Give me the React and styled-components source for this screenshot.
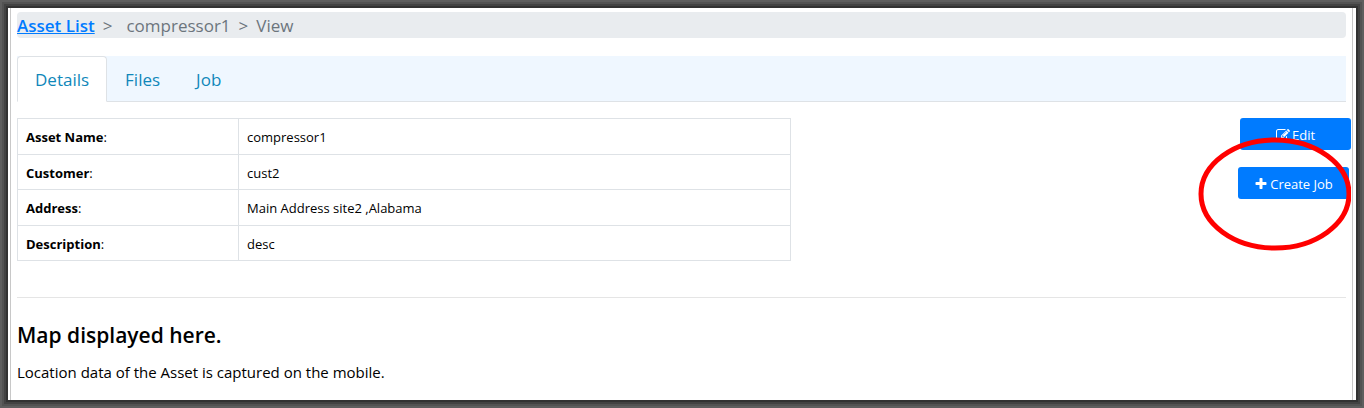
import React from "react";
import styled, { createGlobalStyle } from "styled-components";

const GlobalStyle = createGlobalStyle`
  *, *::before, *::after { box-sizing: border-box; }
  body {
    margin: 0;
    background: #fff;
    color: #000;
    font-family: "Segoe UI", "Open Sans", "Noto Sans", sans-serif;
    font-size: 13px;
    line-height: 20px;
  }
`;

const Frame = styled.div`
  min-height: 100vh;
  padding: 8px 11px 8px 10px;
  display: flex;
  box-shadow:
    inset 0 0 0 2px #5e5e5e,
    inset 0 0 0 4px #525252,
    inset 0 0 0 6px #424242,
    inset 0 0 0 8px #323232;
`;

const Page = styled.main`
  flex: 1;
  min-width: 0;
  padding: 4px 6px 16px;
  border: solid #c8c8c8;
  border-width: 0 1px;
`;

const Breadcrumb = styled.nav`
  display: flex;
  gap: 8px;
  height: 26px;
  border-radius: 4px;
  background: #e9ecef;
  color: #6c757d;
  font-size: 17px;
  line-height: 27px;
`;

const CrumbLink = styled.a`
  color: #007bff;
  font-weight: 600;
  text-decoration: underline;
`;

const Crumb = styled.span`
  margin-left: ${(p) => (p.$spaced ? "6px" : "0")};
`;

const Tabs = styled.div`
  display: flex;
  margin-top: 18px;
  height: 46px;
  background: #eff7ff;
  border-bottom: 1px solid #dee2e6;
`;

const Tab = styled.button`
  height: 46px;
  padding: 2px 17px 0;
  border: 1px solid;
  border-color: ${(p) => (p.$active ? "#dee2e6 #dee2e6 #fff" : "transparent")};
  border-radius: 4px 4px 0 0;
  background: ${(p) => (p.$active ? "#fff" : "transparent")};
  color: #0f87ba;
  font: inherit;
  font-size: 17px;
  cursor: pointer;
`;

const Body = styled.section`
  display: flex;
  justify-content: space-between;
  align-items: flex-start;
  margin: 16px -5px 0 0;
`;

const DetailTable = styled.table`
  width: 58%;
  height: 143px;
  border-collapse: collapse;
  table-layout: fixed;

  th, td {
    padding: 2px 8px 0;
    border: 1px solid #dee2e6;
    text-align: left;
    font-weight: 400;
  }
  th { width: 221px; }
`;

const Actions = styled.div`
  display: flex;
  flex-direction: column;
  align-items: flex-end;
  gap: 17px;
`;

const ActionButton = styled.button`
  display: flex;
  align-items: center;
  justify-content: center;
  gap: 2px;
  width: 111px;
  height: 32px;
  padding: 2px 0 0;
  border: 0;
  border-radius: 3px;
  background: #007bff;
  color: #fff;
  font: inherit;
  white-space: nowrap;
  cursor: pointer;
`;

const Icon = styled.svg`
  width: 14px;
  height: 14px;
  fill: currentColor;
`;

const Highlighted = styled.div`
  position: relative;
  margin-right: 2px;
`;

const Marker = styled.svg`
  position: absolute;
  top: -30px;
  left: -41px;
  width: 154px;
  height: 115px;
  pointer-events: none;
`;

const Divider = styled.hr`
  margin: 36px 0 0;
  border: 0;
  border-top: 1px solid #e5e5e5;
`;

const Heading = styled.h1`
  margin: 22px 0 0;
  font-size: 21px;
  line-height: 30px;
  font-weight: 600;
`;

const Note = styled.p`
  margin: 12px 0 0;
  font-size: 15px;
`;

const details = [
  ["Asset Name", "compressor1"],
  ["Customer", "cust2"],
  ["Address", "Main Address site2 ,Alabama"],
  ["Description", "desc"],
];

const EditIcon = () => (
  <Icon viewBox="0 0 1792 1792" aria-hidden="true">
    <path d="M888 1184l116-116-152-152-116 116v56h96v96h56zm440-720q-16-16-33 1l-350 350q-17 17-1 33t33-1l350-350q17-17 1-33zm80 594v190q0 119-84.5 203.5t-203.5 84.5h-832q-119 0-203.5-84.5t-84.5-203.5v-832q0-119 84.5-203.5t203.5-84.5h832q63 0 117 25 15 7 18 23 3 17-9 29l-49 49q-14 14-32 8-23-6-45-6h-832q-66 0-113 47t-47 113v832q0 66 47 113t113 47h832q66 0 113-47t47-113v-126q0-13 9-22l64-64q15-15 35-7t20 29zm-96-738l288 288-672 672h-288v-288zm444 132l-92 92-288-288 92-92q28-28 68-28t68 28l152 152q28 28 28 68t-28 68z" />
  </Icon>
);

const PlusIcon = () => (
  <Icon viewBox="0 0 1792 1792" aria-hidden="true">
    <path d="M1600 736v192q0 40-28 68t-68 28h-416v416q0 40-28 68t-68 28h-192q-40 0-68-28t-28-68v-416h-416q-40 0-68-28t-28-68v-192q0-40 28-68t68-28h416v-416q0-40 28-68t68-28h192q40 0 68 28t28 68v416h416q40 0 68 28t28 68z" />
  </Icon>
);

export default function App() {
  return (
    <Frame>
      <GlobalStyle />
      <Page>
        <Breadcrumb aria-label="Breadcrumb">
          <CrumbLink href="#assets">Asset List</CrumbLink>
          <span>&gt;</span>
          <Crumb $spaced>compressor1</Crumb>
          <span>&gt;</span>
          <Crumb>View</Crumb>
        </Breadcrumb>
        <Tabs role="tablist">
          <Tab role="tab" aria-selected="true" $active>Details</Tab>
          <Tab role="tab" aria-selected="false">Files</Tab>
          <Tab role="tab" aria-selected="false">Job</Tab>
        </Tabs>
        <Body>
          <DetailTable>
            <tbody>
              {details.map(([label, value]) => (
                <tr key={label}>
                  <th scope="row"><b>{label}</b>:</th>
                  <td>{value}</td>
                </tr>
              ))}
            </tbody>
          </DetailTable>
          <Actions>
            <ActionButton type="button"><EditIcon />Edit</ActionButton>
            <Highlighted>
              <ActionButton type="button"><PlusIcon />Create Job</ActionButton>
              <Marker viewBox="0 0 154 115" aria-hidden="true">
                <ellipse cx="78" cy="57" rx="74" ry="54" fill="none" stroke="#f00" strokeWidth="5" />
              </Marker>
            </Highlighted>
          </Actions>
        </Body>
        <Divider />
        <Heading>Map displayed here.</Heading>
        <Note>Location data of the Asset is captured on the mobile.</Note>
      </Page>
    </Frame>
  );
}
